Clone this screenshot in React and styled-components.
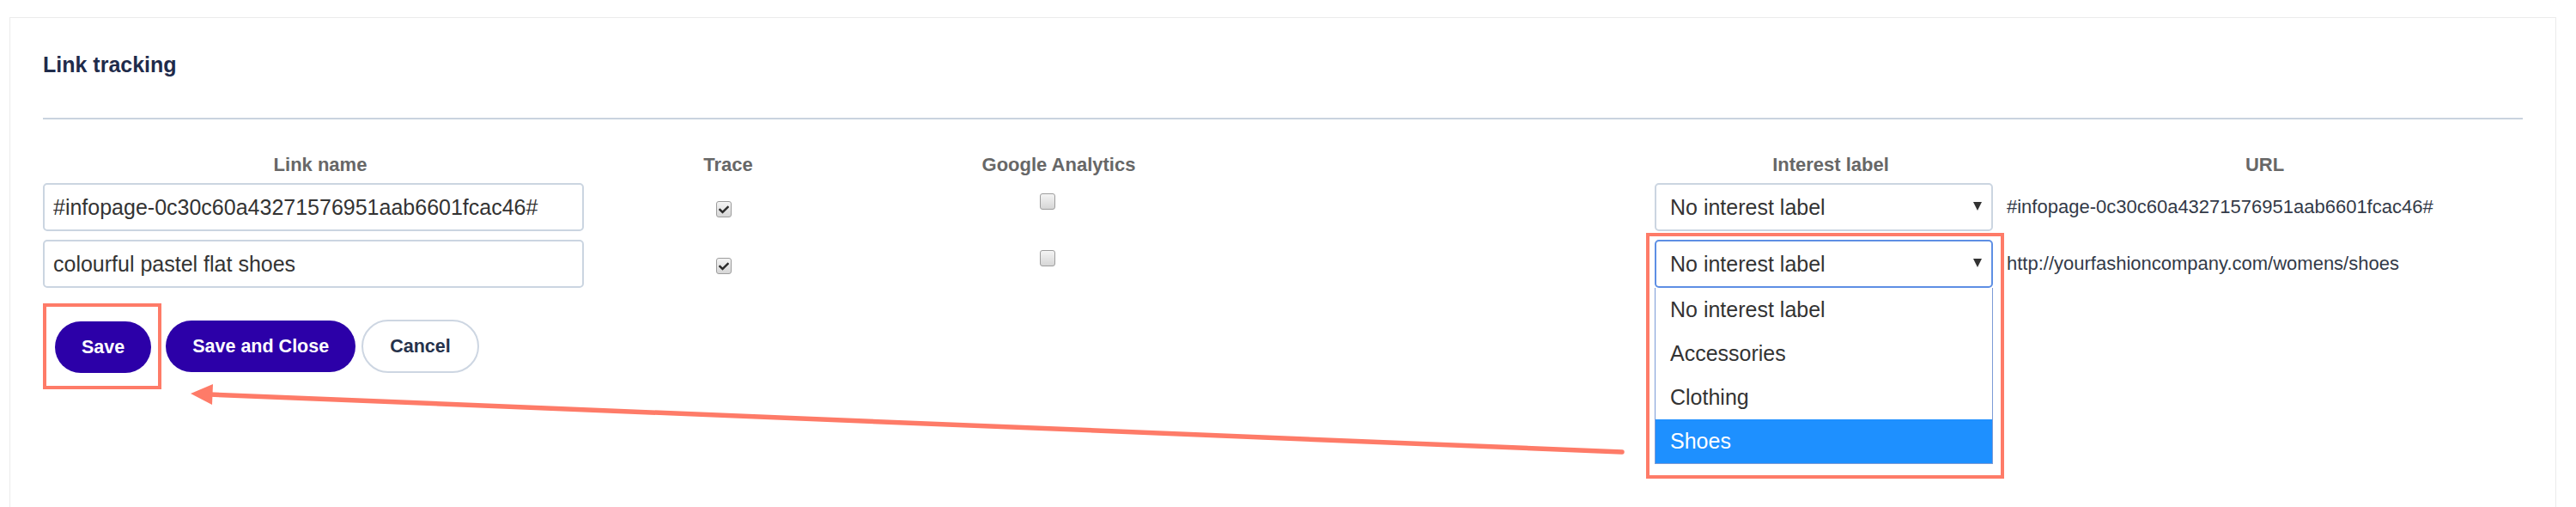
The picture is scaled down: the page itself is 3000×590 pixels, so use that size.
import React from 'react';
import styled, { createGlobalStyle } from 'styled-components';
import { FaCheck } from 'react-icons/fa';

const GlobalStyle = createGlobalStyle`
  html, body {
    margin: 0;
    padding: 0;
    background: #ffffff;
  }
  body {
    font-family: 'Liberation Sans', Arial, sans-serif;
  }
`;

const Page = styled.div`
  position: relative;
  width: 3000px;
  height: 590px;
  overflow: hidden;
  padding-top: 20px;
  box-sizing: border-box;
`;

const Panel = styled.section`
  margin-left: 11px;
  width: 2966px;
  min-height: 620px;
  box-sizing: border-box;
  border: 1px solid #ebebeb;
  background: #ffffff;
  padding: 39px 38px 0;
`;

const Title = styled.h2`
  margin: 0;
  font-size: 25px;
  line-height: 30px;
  font-weight: bold;
  color: #1f2b4b;
`;

const Divider = styled.hr`
  margin: 47px 0 0;
  border: 0;
  height: 2px;
  background: #c9d3df;
`;

const Table = styled.div`
  display: grid;
  grid-template-columns: 646px 304px 466px 461px 410px 1fr;
  grid-auto-rows: 56px;
  grid-template-rows: 23px;
  row-gap: 10px;
  margin-top: 41px;
`;

const HeadCell = styled.div`
  font-size: 22px;
  line-height: 23px;
  font-weight: bold;
  color: #676767;
  text-align: center;
`;

const Cell = styled.div`
  display: flex;
  align-items: center;
  min-width: 0;
`;

const TextInput = styled.input`
  width: 630px;
  height: 56px;
  box-sizing: border-box;
  border: 2px solid #cbd5e1;
  border-radius: 5px;
  padding: 0 10px;
  font-family: 'Liberation Sans', Arial, sans-serif;
  font-size: 25px;
  color: #333333;
  background: #ffffff;
  outline: none;
`;

const Check = styled.span`
  align-self: flex-start;
  margin-left: ${p => p.$left}px;
  margin-top: ${p => p.$top}px;
  width: 18px;
  height: 19px;
  box-sizing: border-box;
  border: 1px solid #9d9d9d;
  border-radius: 3px;
  background: linear-gradient(#f4f4f4, #d6d6d6);
  display: flex;
  align-items: center;
  justify-content: center;
  color: #2b2b2b;
  font-size: 12px;
`;

const SelectWrap = styled.div`
  position: relative;
  width: 394px;
  height: 56px;
`;

const SelectBox = styled.div`
  width: 100%;
  height: 100%;
  box-sizing: border-box;
  border: 2px solid ${p => (p.$focused ? '#5e8fe4' : '#cbd5e1')};
  border-radius: 5px;
  padding: 0 11px 0 16px;
  display: flex;
  align-items: center;
  justify-content: space-between;
  font-size: 25px;
  color: #333333;
  background: #ffffff;
`;

const Caret = styled.span`
  width: 0;
  height: 0;
  border-left: 5px solid transparent;
  border-right: 5px solid transparent;
  border-top: 10px solid #333333;
  margin-bottom: 2px;
`;

const Highlight = styled.div`
  position: absolute;
  left: -10px;
  top: -8px;
  width: 417px;
  height: 286px;
  box-sizing: border-box;
  border: 4px solid #fe7b68;
  pointer-events: none;
`;

const Menu = styled.ul`
  position: absolute;
  left: 0;
  top: 100%;
  width: 100%;
  margin: 0;
  padding: 0;
  list-style: none;
  box-sizing: border-box;
  border: 1px solid #7c9bd6;
  border-top: 0;
  background: #ffffff;
  z-index: 2;
`;

const MenuItem = styled.li`
  height: 51px;
  display: flex;
  align-items: center;
  padding-left: 17px;
  font-size: 25px;
  color: ${p => (p.$active ? '#ffffff' : '#333333')};
  background: ${p => (p.$active ? '#1e90ff' : 'transparent')};
`;

const UrlText = styled.span`
  font-size: 22px;
  color: #333a48;
  white-space: nowrap;
`;

const ButtonRow = styled.div`
  display: flex;
  align-items: center;
  gap: 5px;
  margin-top: 18px;
`;

const Outline = styled.div`
  display: inline-flex;
  border: 4px solid #fe7b68;
  padding: 17px 8px 15px 10px;
`;

const Button = styled.button`
  height: ${p => (p.$ghost ? '62px' : '60px')};
  padding: 0 31px;
  margin-left: ${p => (p.$ghost ? '2px' : '0')};
  border-radius: 31px;
  border: ${p => (p.$ghost ? '2px solid #cdd6e2' : '0')};
  background: ${p => (p.$ghost ? '#ffffff' : '#2c00a8')};
  color: ${p => (p.$ghost ? '#26324b' : '#ffffff')};
  font-family: 'Liberation Sans', Arial, sans-serif;
  font-size: 21.5px;
  font-weight: bold;
  cursor: pointer;
`;

const ArrowLayer = styled.svg`
  position: absolute;
  left: 0;
  top: 0;
  pointer-events: none;
`;

const rows = [
  {
    name: '#infopage-0c30c60a43271576951aab6601fcac46#',
    url: '#infopage-0c30c60a43271576951aab6601fcac46#',
    open: false,
  },
  {
    name: 'colourful pastel flat shoes',
    url: 'http://yourfashioncompany.com/womens/shoes',
    open: true,
  },
];

const labels = ['No interest label', 'Accessories', 'Clothing', 'Shoes'];

const App = () => {
  return (
    <Page>
      <GlobalStyle />
      <Panel>
        <Title>Link tracking</Title>
        <Divider />
        <Table>
          <HeadCell>Link name</HeadCell>
          <HeadCell>Trace</HeadCell>
          <HeadCell>Google Analytics</HeadCell>
          <HeadCell />
          <HeadCell>Interest label</HeadCell>
          <HeadCell>URL</HeadCell>
          {rows.map(row => (
            <React.Fragment key={row.name}>
              <Cell>
                <TextInput defaultValue={row.name} readOnly />
              </Cell>
              <Cell>
                <Check $left={138} $top={21}>
                  <FaCheck />
                </Check>
              </Cell>
              <Cell>
                <Check $left={211} $top={12} />
              </Cell>
              <Cell />
              <Cell>
                <SelectWrap>
                  <SelectBox $focused={row.open}>
                    No interest label
                    <Caret />
                  </SelectBox>
                  {row.open && (
                    <>
                      <Menu>
                        {labels.map(label => (
                          <MenuItem key={label} $active={label === 'Shoes'}>
                            {label}
                          </MenuItem>
                        ))}
                      </Menu>
                      <Highlight />
                    </>
                  )}
                </SelectWrap>
              </Cell>
              <Cell>
                <UrlText>{row.url}</UrlText>
              </Cell>
            </React.Fragment>
          ))}
        </Table>
        <ButtonRow>
          <Outline>
            <Button>Save</Button>
          </Outline>
          <Button>Save and Close</Button>
          <Button $ghost>Cancel</Button>
        </ButtonRow>
      </Panel>
      <ArrowLayer width="3000" height="590" viewBox="0 0 3000 590">
        <line x1="244" y1="459" x2="1889" y2="526" stroke="#fe7b68" strokeWidth="5.5" strokeLinecap="round" />
        <polygon points="222,458 248,447 247,471" fill="#fe7b68" />
      </ArrowLayer>
    </Page>
  );
};

export default App;
